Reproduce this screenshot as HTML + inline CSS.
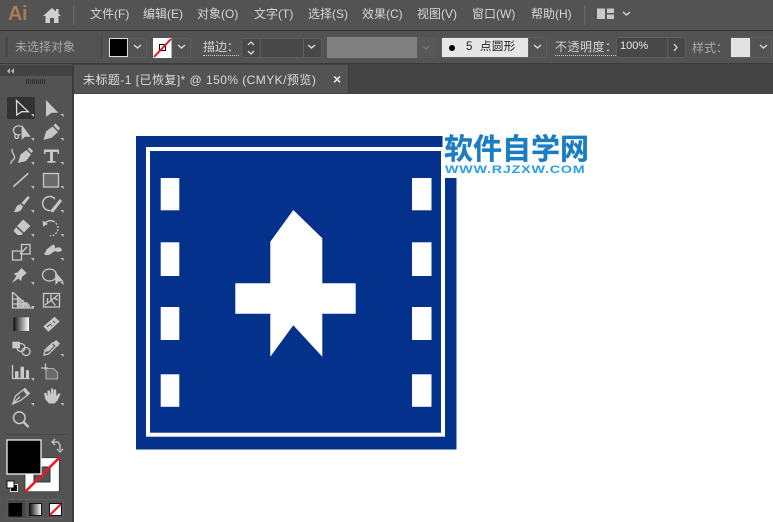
<!DOCTYPE html>
<html><head><meta charset="utf-8">
<style>
html,body{margin:0;padding:0;background:#fff}
body{width:773px;height:522px;position:relative;overflow:hidden;font-family:"Liberation Sans","Noto Sans CJK SC",sans-serif}
.a{position:absolute;white-space:nowrap}
.m{top:6px;font-size:12px;line-height:16px;color:#d6d6d6}
.c{font-size:12px;line-height:16px;color:#c4c4c4}
.bx{position:absolute;box-sizing:border-box;border:1px solid #5f5f5f;border-radius:3px}
</style></head><body>
<div class="a" style="left:0;top:0;width:773px;height:30px;background:#535353"></div>
<div class="a" style="left:0;top:30px;width:773px;height:1px;background:#3a3a3a"></div>
<div class="a" style="left:0;top:31px;width:773px;height:32px;background:#535353"></div>
<div class="a" style="left:0;top:63px;width:773px;height:1px;background:#3c3c3c"></div>
<div class="a" style="left:0;top:64px;width:773px;height:30px;background:#444"></div>
<div class="a" style="left:0;top:64px;width:72px;height:458px;background:#535353"></div>
<div class="a" style="left:0;top:65px;width:72px;height:11px;background:#434343"></div>
<div class="a" style="left:72px;top:64px;width:2px;height:458px;background:#3b3b3b"></div>
<div class="a" style="left:74px;top:65px;width:274px;height:28px;background:#535353;border-right:1px solid #3b3b3b"></div>
<div class="a" style="left:74px;top:94px;width:699px;height:428px;background:#fff"></div>

<div class="a" style="left:8px;top:0;font:bold 20px/28px 'Liberation Sans',sans-serif;color:#ad7a55;letter-spacing:-.5px">Ai</div>
<div class="a m" style="left:90px">文件(F)</div>
<div class="a m" style="left:143px">编辑(E)</div>
<div class="a m" style="left:197px">对象(O)</div>
<div class="a m" style="left:254px">文字(T)</div>
<div class="a m" style="left:308px">选择(S)</div>
<div class="a m" style="left:362px">效果(C)</div>
<div class="a m" style="left:417px">视图(V)</div>
<div class="a m" style="left:472px">窗口(W)</div>
<div class="a m" style="left:531px">帮助(H)</div>

<div class="a c" style="left:15px;top:39px;color:#a8a8a8">未选择对象</div>
<div class="bx" style="left:108px;top:38px;width:39px;height:20px"></div>
<div class="a" style="left:109px;top:38px;width:19px;height:19px;background:#000;outline:1px solid #ddd;outline-offset:-1px"></div>
<div class="bx" style="left:153px;top:38px;width:38px;height:20px"></div>
<div class="a c" style="left:203px;top:40px;color:#d4d4d4;border-bottom:1px dotted #ccc;line-height:15px">描边：</div>
<div class="bx" style="left:241px;top:38px;width:81px;height:20px;background:#484848"></div>
<div class="a" style="left:260px;top:38px;width:1px;height:20px;background:#5f5f5f"></div>
<div class="a" style="left:303px;top:38px;width:1px;height:20px;background:#5f5f5f"></div>
<div class="a" style="left:327px;top:37px;width:90px;height:21px;background:#808080"></div>
<div class="a" style="left:417px;top:37px;width:20px;height:21px;background:#585858"></div>
<div class="bx" style="left:441px;top:37px;width:106px;height:21px"></div>
<div class="a" style="left:442px;top:38px;width:86px;height:19px;background:#e6e6e6"></div>
<div class="a" style="left:449px;top:45px;width:6px;height:6px;border-radius:50%;background:#000"></div>
<div class="a" style="left:466px;top:39px;font-size:11.5px;line-height:16px;color:#222;letter-spacing:.4px">5&nbsp; 点圆形</div>
<div class="a c" style="left:555px;top:40px;color:#d4d4d4;border-bottom:1px dotted #ccc;line-height:15px;letter-spacing:.5px">不透明度：</div>
<div class="bx" style="left:616px;top:37px;width:70px;height:21px;background:#484848"></div>
<div class="a" style="left:667px;top:38px;width:1px;height:19px;background:#5f5f5f"></div>
<div class="a" style="left:620px;top:38px;font-size:11px;line-height:16px;color:#e6e6e6">100%</div>
<div class="a c" style="left:692px;top:40px;color:#a8a8a8">样式：</div>
<div class="bx" style="left:730px;top:37px;width:42px;height:21px"></div>
<div class="a" style="left:731px;top:38px;width:19px;height:19px;background:#e2e2e2"></div>

<div class="a" style="left:83px;top:72px;font-size:12px;line-height:16px;color:#dcdcdc;letter-spacing:.45px">未标题-1 [已恢复]* @ 150% (CMYK/预览)</div>
<div class="a" style="left:333px;top:71px;font:bold 14px/16px 'Liberation Sans',sans-serif;color:#e6e6e6">×</div>

<svg class="a" style="left:0;top:0" width="773" height="522" viewBox="0 0 773 522">
<!-- home -->
<path d="M43 16 L52 8 L56 11.500 V9 H58.500 V13.500 L61 16 H58.500 V23 H54 V18 H50 V23 H45.500 V16 Z" fill="#cfcfcf"/>
<rect x="73" y="5" width="1.500" height="20" fill="#666"/>
<rect x="584" y="5" width="1.500" height="20" fill="#666"/>
<path d="M597 8.500H605V19H597ZM607 8.500H614V13H607ZM607 14.500H614V19H607Z" fill="#c8c8c8"/>
<path d="M623 12l3.500 3 3.500-3M134 45l3.500 3 3.500-3M178 45l3.500 3 3.500-3M308 45l3.500 3 3.500-3M534 45l3.500 3 3.500-3M760 45l3.500 3 3.500-3" stroke="#ddd" stroke-width="1.300" fill="none"/>
<path d="M423 46l3 3 3-3" stroke="#777" stroke-width="1.300" fill="none"/>
<path d="M248 45l3-3 3 3M248 51l3 3 3-3M674 44l3 3.500-3 3.500" stroke="#ddd" stroke-width="1.300" fill="none"/>
<!-- none stroke swatch -->
<rect x="153" y="38" width="19" height="20" fill="#fff"/>
<rect x="159.500" y="44.500" width="6" height="6" fill="none" stroke="#000"/>
<path d="M154 57L171 39" stroke="#e8141c" stroke-width="2"/>
<rect x="171.500" y="38" width="1" height="20" fill="#5f5f5f"/>
<path d="M5 38h3M5 40h3M5 42h3M5 44h3M5 46h3M5 48h3M5 50h3M5 52h3M5 54h3M5 56h3" stroke="#3c3c3c" stroke-width="1"/>
<rect x="101" y="37" width="1" height="22" fill="#3f3f3f"/>
<rect x="528" y="38" width="1" height="19" fill="#5f5f5f"/>
<rect x="750" y="38" width="1" height="19" fill="#5f5f5f"/>
<!-- panel grips -->
<path d="M10 68l-3 3 3 3zM14 68l-3 3 3 3z" fill="#b5b5b5"/>
<path d="M26.500 79v5M28.500 79v5M30.500 79v5M32.500 79v5M34.500 79v5M36.500 79v5M38.500 79v5M40.500 79v5M42.500 79v5M44.500 79v5" stroke="#2f2f2f" stroke-width="1"/>
<rect x="7" y="97" width="28" height="22" rx="2" fill="#333"/>

<defs><linearGradient id="g" x1="0" x2="1"><stop offset="0" stop-color="#111"/><stop offset="1" stop-color="#fff"/></linearGradient></defs>

<!-- outlined tool parts -->
<g fill="none" stroke="#c8c8c8" stroke-width="1.300">
<path d="M16.500 100.500L28.300 111.700H21.700L16.700 115Z" stroke="#d8d8d8"/>
<path d="M21 126.500C16 124.500 13 128 13.500 131C14 134.500 18 135.500 20.500 134.500M15.500 134C14 136 15 138.500 17 138.500C18.500 138.500 19 136.500 17.500 135.500"/>
<path d="M12.500 149C10.500 153 15.500 155 14.500 158C13.500 161 10 161 11 164"/>
<path d="M13.300 186.700L28.300 173.300" stroke-width="1.600"/>
<rect x="43.500" y="173.500" width="15" height="13.500" fill="#6a6a6a"/>
<path d="M50 210.500A7 7 0 1 1 55 199" stroke-width="1.500"/>
<path d="M44 224.500A7.500 7.500 0 1 1 50 235.800" stroke-dasharray="2 1.400"/>
<path d="M44 224.500A7.500 7.500 0 0 1 54 221.500"/>
<rect x="12.500" y="251" width="9" height="9"/>
<rect x="21.500" y="244.500" width="8.500" height="9.500"/>
<path d="M20 254L27 247"/>
<ellipse cx="49.500" cy="275" rx="7" ry="6"/>
<path d="M12.500 292V308H33M12.500 292L28 306M17.500 296V308M23 300V308M12.500 299H20M12.500 304H27"/>
<rect x="43.500" y="293.500" width="16" height="13.500"/>
<path d="M45 305C49 302 53 299 58 295M51 300V294.500M51 300L55.500 305.500M47.500 303V298M54 298L58 300"/>
<circle cx="21" cy="347.500" r="4"/>
<circle cx="26" cy="351.500" r="4"/>
<path d="M44 355L45 350L53 342.500L56.500 346L48.500 354Z"/>
<path d="M12.500 365V378.500H29.500"/>
<path d="M41 368H48M45.500 363.500V370"/>
<path d="M12.700 404L15.500 396L25 388.500L29.300 393.500L20.500 400.500Z"/>
<path d="M13.500 403L20 396.500"/>
<circle cx="19.300" cy="417.700" r="5.800" stroke-width="1.500"/>
<path d="M23.500 422L28.500 427" stroke-width="2.400"/>
</g>

<!-- filled tool parts -->
<g fill="#c8c8c8">
<path d="M46 100L58.300 112.700H51.700L46 116.700Z"/>
<path d="M21.500 124.500L30.700 136.700H25L21.700 140Z"/>
<path d="M43.500 140L46 131.500L52.500 126.500L58 132L52 137.500ZM53.500 125.500L55.500 123.500L60 128L58.500 130.500Z"/>
<path d="M18 163L20.500 154.500L26.500 150L31 154.500L26 161ZM27.500 149L29.500 147.500L33 151L31.500 153Z"/>
<path d="M44 149.500H59V154H57.500V152H53V161H55.500V162.700H47.500V161H50V152H45.500V154H44Z"/>
<path d="M13.500 211.700C15.500 211 15.500 207 17.500 205.500L20.500 204L23 206.500L21.500 209.500C19.500 212 16 212.500 13.500 211.700ZM21.500 203L28 196L29.800 197.500L24 205Z"/>
<path d="M50 211L60 199L62 201L53 212.500Z"/>
<path d="M23.300 219.500L30.300 226L24 232.500L17 226ZM16 227.300L22.800 233.500L21.500 235H17.500L13.500 231Z"/>
<path d="M42.700 220.500L43 226.500L48 224Z"/>
<path d="M11.700 283L16.500 276L13.500 273.500L17.500 272.500L21.500 268L26.700 273L22 277L21 281L18.500 278.500Z"/>
<path d="M43.500 254C45.500 253 46 251 46.500 249.500L53 244.500C55 245 55.500 247 54.500 248.500L57 247.500C60 247 62 248.500 62 250.500C60 252.500 57.500 252 55 251L52 253C50 255 47 256 43.500 254Z"/>
<path d="M55 271.500L63.700 281.500H58.500L55.500 285Z"/>
<path d="M18 297.500L22 300V303L27 302L30 305V307.500H18Z" opacity=".75"/>
<path d="M43.300 326.500L54.500 316.700L59.700 321.500L48.500 331.700Z"/>
<rect x="12.300" y="341.700" width="7.700" height="6.600"/>
<path d="M45 352L49 351L54 346L52 344L47 349ZM53 343L56 340L60 343.500L57 347Z"/>
<path d="M15 371H18.500V378H15ZM20.500 366.500H24V378H20.500ZM26 370H29V378H26Z" transform="translate(0 .2)"/>
<path d="M46 368.500H53.500L57.700 372.500V379H46Z" stroke="#c8c8c8" stroke-width=".8" fill="#6a6a6a"/>
<path d="M44 393.500L46 392.500L47.500 396V390.500H49.800L51 395V388.500H53L53.800 395V389.500H56L56.500 396L59 393L60.500 394L57.500 400.500L54.500 403.500H49L45.500 399.500Z"/>
<path d="M25 388L29.300 393L27 395L23.500 391Z"/>
</g>
<path d="M47 327L49.500 324.500M50 324L52 326M53 321L55 323" stroke="#535353" stroke-width="1" fill="none"/>

<!-- corner triangles -->
<path d="M34 117v-3h-3zM63.500 117v-3h-3zM34 141v-3h-3zM63.500 141v-3h-3zM34 165v-3h-3zM63.500 165v-3h-3zM34 189v-3h-3zM63.500 189v-3h-3zM34 213v-3h-3zM63.500 213v-3h-3zM34 237v-3h-3zM63.500 237v-3h-3zM34 261v-3h-3zM63.500 261v-3h-3zM34 285v-3h-3zM63.500 285v-3h-3zM34 309v-3h-3zM63.500 357v-3h-3zM34 381v-3h-3zM34 406v-3h-3zM63.500 406v-3h-3z" fill="#c8c8c8"/>
<!-- gradient tool -->
<rect x="13.300" y="317.300" width="15.700" height="13.700" fill="url(#g)"/>
<!-- color area -->
<rect x="25" y="457.700" width="34.300" height="34" fill="#fff" stroke="#333" stroke-width=".8"/>
<rect x="34" y="467" width="16" height="15" fill="#535353" stroke="#333"/>
<path d="M25 492L60 457" stroke="#f0141e" stroke-width="2.500"/>
<rect x="7" y="440" width="34" height="34" fill="#000" stroke="#eee" stroke-width="1.300"/>
<path d="M52 442h6l2 3v5M57 449l3 3 3-3M55 439l-3 3 3 3" fill="none" stroke="#bdbdbd" stroke-width="1.500"/>
<rect x="10.500" y="484.500" width="7" height="7" fill="#000" stroke="#ddd"/>
<rect x="7" y="481" width="7" height="7" fill="#fff" stroke="#111"/>
<rect x="7" y="500" width="18" height="18" fill="#474747"/>
<rect x="7" y="499.500" width="56" height="19" rx="2" fill="none" stroke="#626262"/>
<rect x="8.500" y="503" width="13.500" height="13.500" fill="#000"/>
<rect x="29.500" y="503.500" width="12" height="12" fill="url(#g)" stroke="#111"/>
<rect x="49.500" y="503.500" width="12" height="12" fill="#fff" stroke="#111"/>
<path d="M50 515L61 504" stroke="#f0141e" stroke-width="2"/>
<rect x="7" y="434" width="60" height="1" fill="#444"/>

<!-- artwork -->
<rect x="136" y="136" width="320.500" height="313.500" fill="#03318c"/>
<rect x="148" y="149" width="295" height="285.700" fill="none" stroke="#fff" stroke-width="4"/>
<g fill="#fff">
<rect x="160.700" y="178" width="18.600" height="32.300"/>
<rect x="160.700" y="242.300" width="18.600" height="33.700"/>
<rect x="160.700" y="307" width="18.600" height="33"/>
<rect x="160.700" y="374.300" width="18.600" height="32.500"/>
<rect x="412" y="178" width="19.500" height="32.300"/>
<rect x="412" y="242.300" width="19.500" height="33.700"/>
<rect x="412" y="307" width="19.500" height="33"/>
<rect x="412" y="374.300" width="19.500" height="32.500"/>
<path d="M293.300 210L322.300 238.300V283.300H355.700V313.700H322.300V356.700L293.300 325.300L270.300 356.700V313.700H235.300V283.300H270.300V241.700Z"/>
<rect x="442.500" y="130" width="150" height="48"/>
</g>
</svg>
<div class="a" style="left:444px;top:132px;font:bold 29px/36px 'Liberation Sans','Noto Sans CJK SC',sans-serif;color:#1a7dc3;-webkit-text-stroke:.3px #1a7dc3">软件自学网</div>
<div class="a" style="left:445px;top:163px;font:bold 11px/14px 'Liberation Sans',sans-serif;color:#2a9fe6;letter-spacing:.6px;transform:scaleX(1.3);transform-origin:0 0">WWW.RJZXW.COM</div>
</body></html>
